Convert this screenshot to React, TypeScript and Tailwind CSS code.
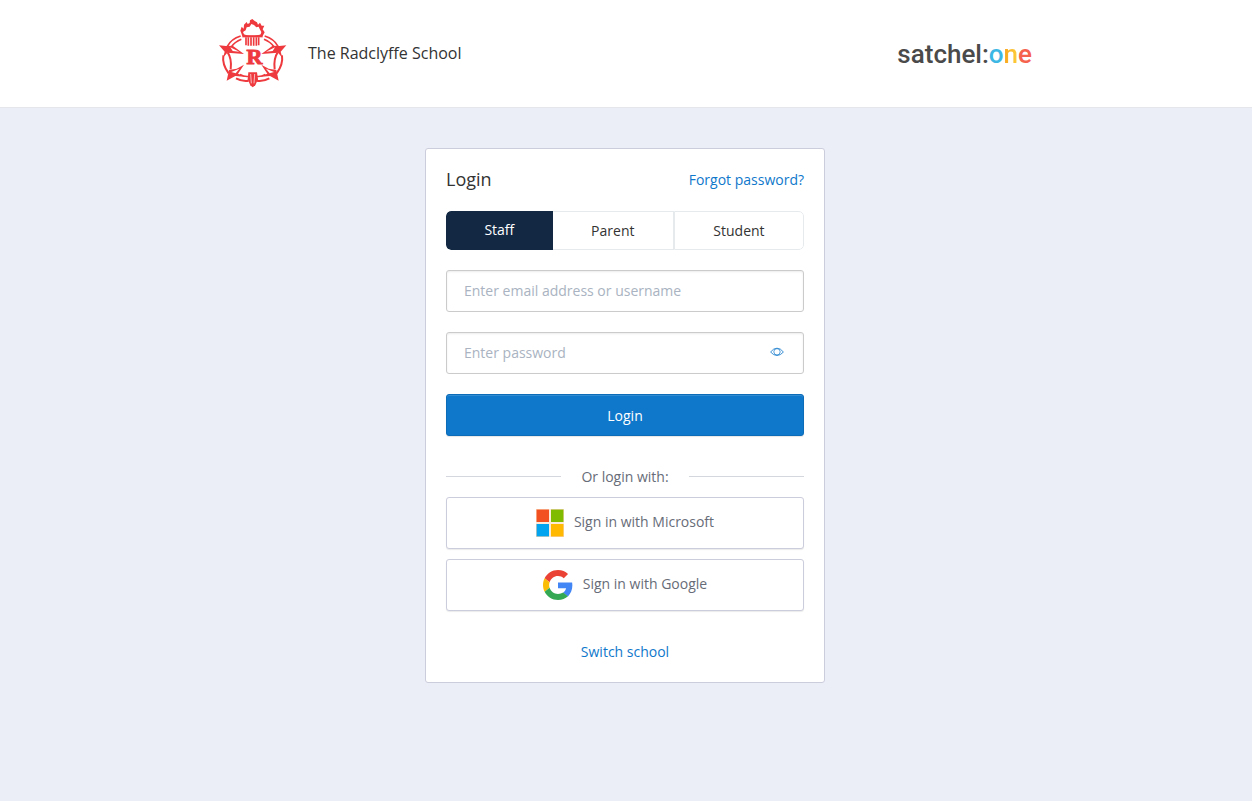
import { useState } from "react";

const roles = ["Staff", "Parent", "Student"];

function CrestRibbons() {
  return (
    <g>
      <path d="M34 91 Q45 69 74 60 M46 93 Q56 78 76 70" strokeWidth="5" />
      <path d="M9 88 L30 90 L50 89 L84 114 L34 110 L21 125 L26 107 Z" fill="#ee3a3e" stroke="none" />
      <path d="M43 94 L70 107 L50 105 Z" fill="#fff" stroke="none" />
      <path d="M22 118 Q18 145 38 172" strokeWidth="6" />
      <path d="M35 109 Q48 128 44 160" strokeWidth="6" />
      <path d="M32 194 L39 162 L62 158 L84 146 L66 173 L92 183 L58 180 Z" fill="#ee3a3e" stroke="none" />
      <path d="M46 168 L70 158 L59 172 Z" fill="#fff" stroke="none" />
      <path d="M60 187 Q78 197 98 194" strokeWidth="6" />
      <path d="M72 175 Q86 183 98 181" strokeWidth="4" />
    </g>
  );
}

function SchoolCrest() {
  return (
    <svg viewBox="6 6 210 210" className="size-[70px]" fill="none" stroke="#ee3a3e" role="img" aria-label="School crest">
      <path
        d="M79 60 L73 44 L77 32 L83 38 L84 26 L92 18 L95 24 L101 21 L102 13 L109 9 L116 15 L123 19 L126 26 L132 20 L137 29 L145 29 L140 40 L146 49 L140 60 Z"
        fill="#ee3a3e"
        stroke="none"
      />
      <path
        d="M84 55 L81 48 L89 43 L92 34 L101 32 L106 24 L114 27 L121 34 L128 32 L131 39 L136 48 L134 55 C128 60 90 60 84 55 Z"
        fill="#fff"
        stroke="none"
      />
      <path d="M79 61 H140" strokeWidth="6" />
      <path d="M90 64 V88 M97 64 V89 M105 64 V89 M113 64 V89 M121 64 V89 M128 64 V88" strokeWidth="5" />
      <CrestRibbons />
      <g transform="translate(220 0) scale(-1 1)">
        <CrestRibbons />
      </g>
      <path d="M97 169 H123 L126 190 L118 208 L110 214 L103 208 L95 190 Z" fill="#ee3a3e" stroke="none" />
      <path d="M104 174 L106 202 M116 174 L114 202" stroke="#fff" strokeWidth="2" />
      <text
        x="115"
        y="145"
        textAnchor="middle"
        fontSize="66"
        strokeWidth="3"
        fill="#ee3a3e"
        className="font-['Liberation_Serif',serif] font-bold"
      >
        R
      </text>
    </svg>
  );
}

function EyeIcon() {
  return (
    <svg viewBox="0 0 14 10" className="h-[10px] w-[14px]" fill="none" stroke="#2784cf" aria-hidden="true">
      <path d="M.6 5 Q3.5 1.2 7 1.2 T13.4 5 Q10.500 8.500 7 8.500 T.6 5 Z" strokeWidth=".9" />
      <circle cx="7" cy="4.800" r="3.200" strokeWidth=".8" />
    </svg>
  );
}

function MicrosoftIcon() {
  return (
    <svg viewBox="0 0 28 28" className="size-7" aria-hidden="true">
      <path fill="#f8d5b4" d="M0 0h28v28H0z" />
      <path fill="#fff" d="M13 0h2v28h-2zM0 13h28v2H0z" opacity=".5" />
      <path fill="#f35022" d="M.6.6h12.400v12.400H.6z" />
      <path fill="#80ba01" d="M15 .6h12.400v12.400H15z" />
      <path fill="#02a4ef" d="M.6 15h12.400v12.400H.6z" />
      <path fill="#ffb902" d="M15 15h12.400v12.400H15z" />
    </svg>
  );
}

function GoogleIcon() {
  return (
    <svg viewBox="0 0 48 48" className="size-[30px]" aria-hidden="true">
      <path fill="#EA4335" d="M24 9.500c3.540 0 6.710 1.220 9.210 3.600l6.850-6.850C35.900 2.380 30.470 0 24 0 14.620 0 6.510 5.380 2.560 13.220l7.980 6.190C12.430 13.720 17.740 9.500 24 9.500z" />
      <path fill="#4285F4" d="M46.980 24.550c0-1.570-.15-3.090-.38-4.550H24v9.020h12.940c-.58 2.960-2.260 5.480-4.780 7.180l7.730 6c4.510-4.180 7.090-10.360 7.090-17.650z" />
      <path fill="#FBBC05" d="M10.530 28.590c-.48-1.450-.76-2.990-.76-4.590s.27-3.140.76-4.590l-7.980-6.190C.92 16.460 0 20.120 0 24c0 3.880.92 7.540 2.560 10.780l7.970-6.190z" />
      <path fill="#34A853" d="M24 48c6.480 0 11.930-2.130 15.890-5.810l-7.730-6c-2.150 1.450-4.920 2.300-8.160 2.300-6.260 0-11.570-4.220-13.470-9.910l-7.980 6.190C6.510 42.620 14.620 48 24 48z" />
    </svg>
  );
}

const fieldClass =
  "h-[42px] w-full rounded-[3px] border border-[#cbcbcb] bg-white pl-[17px] pb-0.5 text-[#333] shadow-[inset_0_1px_2px_rgba(0,0,0,0.08)] outline-none placeholder:text-[#a9b3c1] focus:border-[#0f78cb]";
const providerClass =
  "flex h-[52px] w-full items-center justify-center gap-2.5 rounded-[3px] border border-[#cbcddc] bg-white text-[#676c78] shadow-[0_1px_1px_rgba(0,0,0,0.08)]";

export default function App() {
  const [role, setRole] = useState("Staff");
  const [visible, setVisible] = useState(false);

  return (
    <div className="min-h-screen bg-[#ebeef7] font-['Open_Sans',sans-serif] text-sm text-[#333]">
      <header className="border-b border-[#e4e6ec] bg-white">
        <div className="mx-auto flex h-[107px] max-w-[816px] items-center justify-between pr-0.5">
          <div className="flex items-center gap-5 pb-0.5">
            <SchoolCrest />
            <span className="text-base">The Radclyffe School</span>
          </div>
          <a href="#home" className="pt-0.5 font-[Roboto,sans-serif] text-[26px] font-medium text-[#4a4a4a]">
            satchel:<span className="text-[#3db7e4]">o</span>
            <span className="bg-linear-to-r from-[#f9a51a] to-[#fdd03b] bg-clip-text text-transparent">n</span>
            <span className="text-[#f5624d]">e</span>
          </a>
        </div>
      </header>

      <main className="flex justify-center py-10 pr-0.5">
        <section className="w-full max-w-[400px] rounded-[3px] border border-[#cbcddc] bg-white p-5">
          <div className="flex h-[22px] items-center justify-between">
            <h1 className="pb-0.5 text-lg">Login</h1>
            <a href="#forgot" className="text-[#0f78cb]">Forgot password?</a>
          </div>

          <div className="mt-5 flex h-[39px] overflow-hidden rounded-[5px]">
            {roles.map((name) => (
              <button
                key={name}
                type="button"
                aria-pressed={role === name}
                onClick={() => setRole(name)}
                className={
                  role === name
                    ? "flex-auto rounded-l-[5px] bg-[#132843] px-[38px] pb-0.5 text-white"
                    : "flex-auto border border-[#e6eaed] bg-white px-[38px] first:rounded-l-[5px] last:rounded-r-[5px] not-last:border-l-0"
                }
              >
                {name}
              </button>
            ))}
          </div>

          <form onSubmit={(e) => e.preventDefault()} className="mt-5 flex flex-col gap-5">
            <input aria-label="Email address or username" placeholder="Enter email address or username" className={fieldClass} />
            <div className="relative">
              <input
                aria-label="Password"
                type={visible ? "text" : "password"}
                placeholder="Enter password"
                className={fieldClass}
              />
              <button
                type="button"
                aria-label="Show password"
                onClick={() => setVisible(!visible)}
                className="absolute inset-y-0 right-5 flex items-center pb-0.5"
              >
                <EyeIcon />
              </button>
            </div>
            <button
              type="submit"
              className="h-[42px] rounded-[3px] border border-[#0c6cb8] bg-[#0f78cb] pt-0.5 text-white shadow-[inset_0_1px_0_rgba(255,255,255,0.15),0_1px_1px_rgba(0,0,0,0.1)]"
            >
              Login
            </button>
          </form>

          <div className="mt-[31px] flex items-center gap-5 text-[#676c78]">
            <span className="mb-0.5 h-px flex-1 bg-[#d5d7de]" />
            <span>Or login with:</span>
            <span className="mb-0.5 h-px flex-1 bg-[#d5d7de]" />
          </div>

          <div className="mt-2.5 flex flex-col gap-2.5">
            <button type="button" className={providerClass}>
              <MicrosoftIcon />
              <span className="pb-0.5">Sign in with Microsoft</span>
            </button>
            <button type="button" className={providerClass}>
              <GoogleIcon />
              <span className="pb-0.5">Sign in with Google</span>
            </button>
          </div>

          <div className="mt-[31px] text-center">
            <a href="#switch" className="text-[#0f78cb]">Switch school</a>
          </div>
        </section>
      </main>
    </div>
  );
}
